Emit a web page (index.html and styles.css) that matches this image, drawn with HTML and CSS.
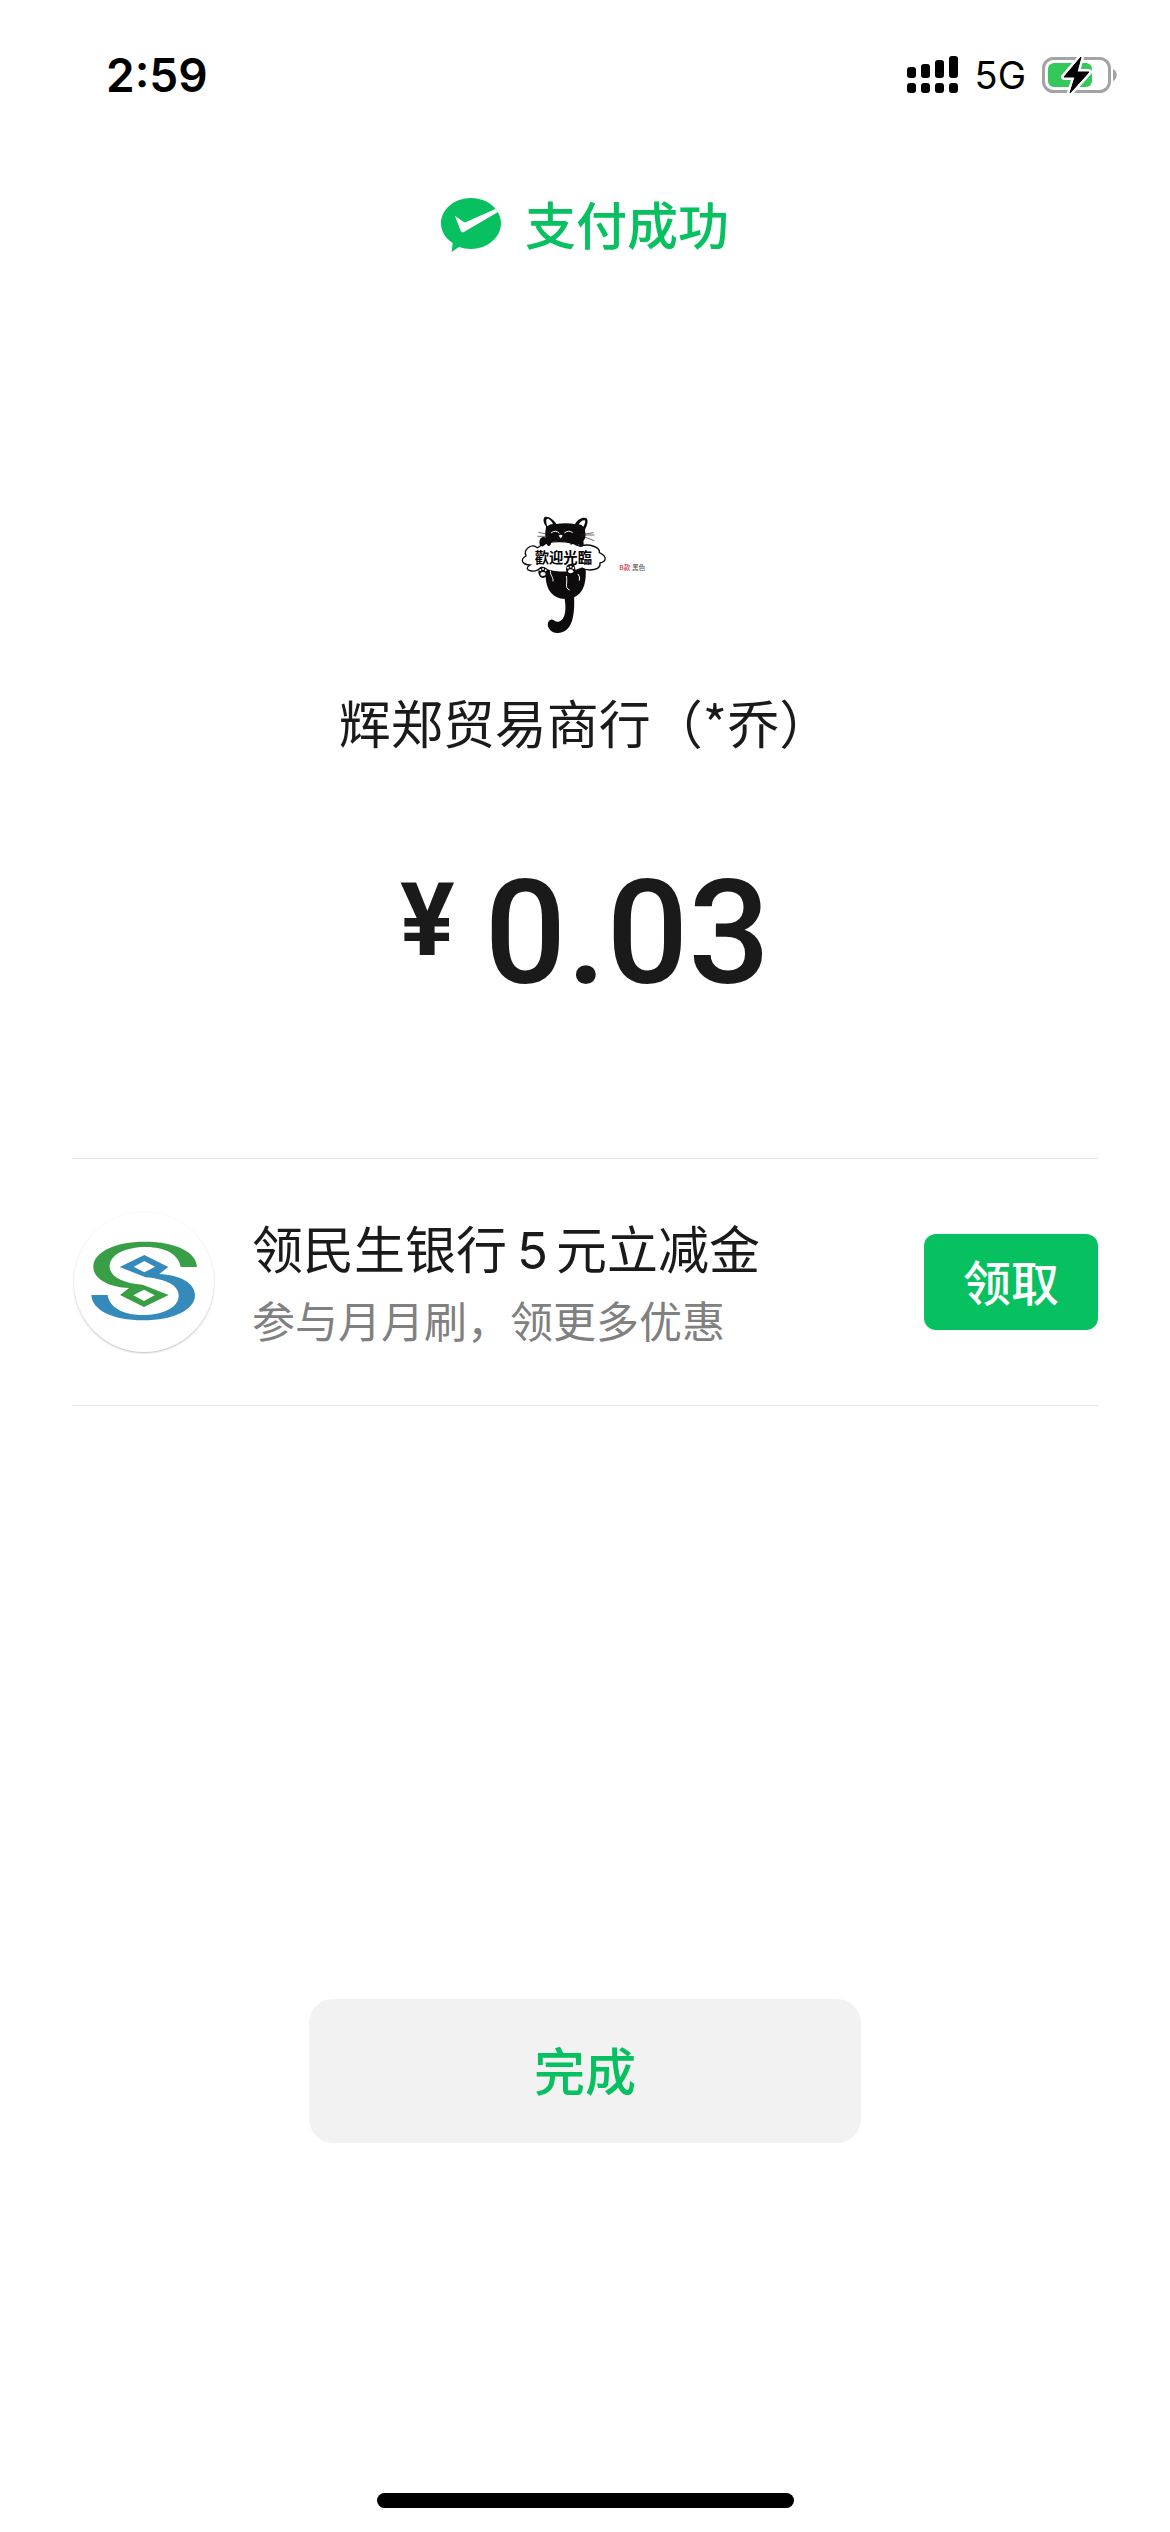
FILE: index.html
```html
<!DOCTYPE html>
<html lang="zh-CN">
<head>
  <meta charset="UTF-8" />
  <meta name="viewport" content="width=device-width, initial-scale=1" />
  <title>支付成功</title>
  <link rel="stylesheet" href="styles.css">
</head>
<body>

  <!-- Status bar -->
  <div class="status-bar">
    <span class="time">2:59</span>
    <div class="status-icons">
      <svg class="signal" viewBox="0 0 52 38" aria-hidden="true">
        <rect x="0" y="11" width="9" height="11" rx="3"/>
        <rect x="14" y="8" width="9" height="14" rx="3"/>
        <rect x="28" y="4" width="9" height="18" rx="3"/>
        <rect x="42" y="0" width="9" height="22" rx="3"/>
        <rect x="0" y="27" width="9" height="10" rx="3"/>
        <rect x="14" y="27" width="9" height="10" rx="3"/>
        <rect x="28" y="27" width="9" height="10" rx="3"/>
        <rect x="42" y="27" width="9" height="10" rx="3"/>
      </svg>
      <span class="network">5G</span>
      <svg class="battery" viewBox="0 0 76 38" aria-hidden="true">
        <rect x="1.5" y="2.5" width="66" height="33" rx="10" fill="none" stroke="#a3a3a3" stroke-width="3"/>
        <path d="M71 13c5 2 5 10 0 12z" fill="#a3a3a3"/>
        <rect x="6" y="7" width="44" height="24" rx="6" fill="#34c759"/>
        <path d="M39 1 22 21h11l-5 16 19-21H35z" fill="#000" stroke="#fff" stroke-width="6" stroke-linejoin="round" paint-order="stroke"/>
        <path d="M39 1 22 21h11l-5 16 19-21H35z" fill="#000" stroke="#000" stroke-width="1" stroke-linejoin="round"/>
      </svg>
    </div>
  </div>

  <header class="result">
    <svg class="result-icon" viewBox="0 0 180 162" aria-hidden="true">
      <path d="M90 0c50 0 90 34 90 76s-40 77-90 77c-13 0-25-2-36-6l-22 15 3-27C13 121 0 100 0 76 0 34 40 0 90 0z" fill="#07c160"/>
      <path d="M43 57c-2-3 0-3 3-1l22 16c3 2 5 1 9-1l86-38 8 9-101 59c-6 4-8 2-11-3z" fill="#fff"/>
    </svg>
    <h1>支付成功</h1>
  </header>

  <main>
    <!-- Payee -->
    <section class="payee">
      <svg class="avatar" viewBox="0 0 510 450" role="img" aria-label="歡迎光臨">
        <g fill="#0d0b0c">
          <path d="M192 285c8 40 6 73-16 80-11 3-14-10-24-6-16 6-10 38 19 40 49 1 54-60 51-114z"/>
          <path d="M137 208c-4 55 16 89 60 89 46 0 66-38 59-101z"/>
          <path d="M138 115c-5-13 0-26 0-36-10-13-9-27-2-29 12-1 26 9 33 22 17-3 39-3 56 0 7-13 21-21 33-18 10 4 2 26-3 35 1 12 4 23-4 33-18 24-84 24-113-7z"/>
        </g>
        <path d="M142 79c-6-17-3-26 5-21 6 3 10 10 12 14-8 1-13 3-17 7zM236 73c5-8 13-14 18-12 4 3 0 12-4 19-4-4-8-6-14-7z" fill="#fff"/>
        <path d="M153 99q14-11 25 1M193 99q13-10 25-1" fill="none" stroke="#fff" stroke-width="3"/>
        <path d="M176 107q6-5 12 0l-6 8z" fill="#fff"/>
        <path d="M115 97l28 6M112 109h32M242 104l39-6M242 107l41 15M245 105h38" stroke="#222" stroke-width="2"/>
        <path d="M90 195c-24-1-31-17-12-27-9-21 17-39 34-25 36-26 98-21 128-4 28-11 62 4 58 19 23 10 23 27 2 31 3 21-33 26-54 15-43 21-95 13-122-2-22 22-59 7-34-7z" fill="#fff" stroke="#0d0b0c" stroke-width="4"/>
        <g fill="#0d0b0c">
          <path d="M119 135c-5-29 17-27 24-19 10 1 14 8 8 20-7 7-10-3-13-6-5 9-13 13-19 5zM212 135c-3-22 11-25 20-18 15-4 22 7 18 20-7 6-12 1-14-6-4 8-10 8-14-1z"/>
          <ellipse cx="129" cy="217" rx="14" ry="17"/>
          <ellipse cx="212" cy="208" rx="14" ry="17"/>
        </g>
        <g fill="#fff">
          <ellipse cx="129" cy="222" rx="8" ry="6"/>
          <circle cx="121" cy="210" r="3"/><circle cx="129" cy="207" r="3"/><circle cx="137" cy="211" r="3"/>
          <ellipse cx="212" cy="214" rx="8" ry="6"/>
          <circle cx="204" cy="203" r="3"/><circle cx="212" cy="200" r="3"/><circle cx="220" cy="204" r="3"/>
        </g>
        <path d="M151 212c0 17 9 17 8 32M199 228c5 22-7 35 10 42M234 222q7 8 4 20" fill="none" stroke="#fff" stroke-width="3"/>
        <text class="avatar-sign" x="104" y="189">歡迎光臨</text>
        <text class="avatar-note" x="358" y="211"><tspan class="avatar-red">B款</tspan> 黑色</text>
      </svg>
      <p class="payee-name">辉郑贸易商行（*乔）</p>
      <p class="amount"><span class="currency">¥</span><span>0.03</span></p>
    </section>

    <!-- Bank coupon -->
    <section class="offer">
      <svg class="bank-logo" viewBox="42 222 420 420" role="img" aria-label="民生银行">
        <path d="M362 387C358 352 318 327 258 327C196 327 149 350 149 385C149 415 185 435 248 440L326 471L252 507L180 471L207 450C145 447 100 423 100 386C100 342 165 311 255 311C348 311 410 343 411 387zM252 455L220 472L252 489L284 472z" fill="#399f46" fill-rule="evenodd"/>
        <path transform="rotate(180 252.5 429)" d="M362 387C358 352 318 327 258 327C196 327 149 350 149 385C149 415 185 435 248 440L326 471L252 507L180 471L207 450C145 447 100 423 100 386C100 342 165 311 255 311C348 311 410 343 411 387zM252 455L220 472L252 489L284 472z" fill="#368abb" fill-rule="evenodd"/>
      </svg>
      <div class="offer-text">
        <h2>领民生银行<span class="number">5</span>元立减金</h2>
        <p>参与月月刷，领更多优惠</p>
      </div>
      <button class="claim-button" type="button">领取</button>
    </section>
  </main>

  <footer>
    <button class="done-button" type="button">完成</button>
    <div class="home-indicator"></div>
  </footer>

</body>
</html>
```

FILE: styles.css
```css
* {
  box-sizing: border-box;
  margin: 0;
  padding: 0;
}

body {
  display: flex;
  flex-direction: column;
  min-height: 100vh;
  background: #fff;
  color: #1a1a1a;
  font-family: "Noto Sans CJK SC", sans-serif;
}

button {
  border: none;
  font-family: inherit;
  cursor: pointer;
}

.status-bar {
  display: flex;
  align-items: center;
  justify-content: space-between;
  height: 150px;
  padding: 0 52px 0 106px;
  color: #000;
  font-family: Inter, sans-serif;
}

.time {
  font-size: 46px;
  font-weight: 600;
}

.status-icons {
  display: flex;
  align-items: center;
}

.signal {
  width: 52px;
  height: 38px;
}

.network {
  margin: 0 16px;
  font-size: 38px;
}

.battery {
  width: 76px;
  height: 38px;
}

.result {
  display: flex;
  align-items: center;
  justify-content: center;
  gap: 24px;
  height: 150px;
  color: #07c160;
}

.result-icon {
  width: 60px;
  height: 54px;
}

.result h1 {
  padding-bottom: 4px;
  font-size: 51px;
  font-weight: 500;
}

.payee {
  display: flex;
  flex-direction: column;
  align-items: center;
  padding-top: 200px;
}

.avatar {
  width: 170px;
  height: 150px;
}

.avatar-sign {
  font-size: 43px;
  font-weight: 700;
}

.avatar-note {
  font-size: 20px;
  font-weight: 500;
  fill: #555;
}

.avatar-red {
  fill: #d0304c;
}

.payee-name {
  margin-top: 34px;
  font-size: 52px;
  line-height: 76px;
}

.amount {
  display: flex;
  align-items: flex-start;
  gap: 30px;
  margin-top: 88px;
  font-family: Roboto, sans-serif;
  font-size: 144px;
  font-weight: 500;
  line-height: 172px;
}

.currency {
  font-size: 102px;
  font-weight: 700;
  line-height: 144px;
}

.offer {
  display: flex;
  align-items: center;
  margin: 138px 72px 0;
  height: 248px;
  padding-left: 2px;
  border-top: 1px solid #e5e5e5;
  border-bottom: 1px solid #e5e5e5;
}

.bank-logo {
  width: 140px;
  height: 140px;
  border-radius: 50%;
  box-shadow: 0 1px 2px rgba(0, 0, 0, 0.25);
}

.offer-text {
  flex: 1;
  padding: 0 0 2px 38px;
}

.offer-text h2 {
  font-size: 51px;
  font-weight: 400;
  line-height: 72px;
}

.number {
  margin: 0 8px 0 10px;
  font-family: Inter, sans-serif;
}

.offer-text p {
  color: #808080;
  font-size: 43px;
  font-weight: 400;
  line-height: 64px;
}

.claim-button {
  width: 174px;
  height: 96px;
  padding-bottom: 4px;
  border-radius: 12px;
  background: #07c160;
  color: #fff;
  font-size: 48px;
  font-weight: 500;
}

footer {
  display: flex;
  flex-direction: column;
  align-items: center;
  gap: 350px;
  margin-top: auto;
  padding-bottom: 24px;
}

.done-button {
  width: 552px;
  height: 144px;
  padding-bottom: 4px;
  border-radius: 24px;
  background: #f2f2f2;
  color: #07c160;
  font-size: 51px;
  font-weight: 500;
}

.home-indicator {
  width: 417px;
  height: 15px;
  border-radius: 8px;
  background: #000;
}
```
